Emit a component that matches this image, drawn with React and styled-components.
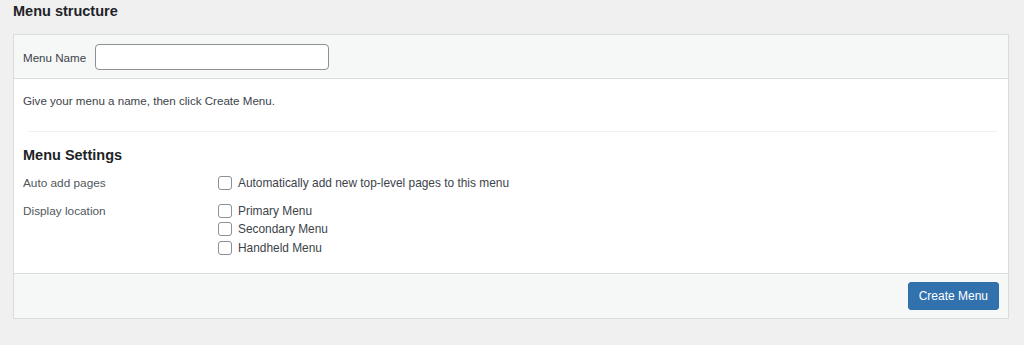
import styled, { createGlobalStyle } from "styled-components";

const GlobalStyle = createGlobalStyle`
  body {
    margin: 0;
    background: #f0f0f1;
    font-family: "Liberation Sans", Arial, sans-serif;
    color: #1d2327;
  }
`;

const Page = styled.div`
  padding: 0 15px 0 13px;
`;

const Title = styled.h2`
  margin: 0 0 12px;
  font-size: 14.5px;
  line-height: 22px;
  font-weight: 700;
`;

const Panel = styled.div`
  background: #fff;
  border: 1px solid #dcdcde;
  box-shadow: 0 1px 1px rgba(0, 0, 0, 0.04);
`;

const Header = styled.div`
  display: flex;
  align-items: center;
  background: #f6f7f7;
  border-bottom: 1px solid #dcdcde;
  padding: 9px 9px 8px;
`;

const FieldLabel = styled.label`
  width: 72px;
  font-size: 11.6px;
  color: #3c434a;
`;

const TextInput = styled.input`
  box-sizing: border-box;
  width: 234px;
  height: 26px;
  border: 1px solid #8c8f94;
  border-radius: 4px;
  background: #fff;
  padding: 0 8px;
  font: inherit;
`;

const Body = styled.div`
  padding: 13px 9px 0;
`;

const Hint = styled.p`
  margin: 0;
  font-size: 11.6px;
  line-height: 18px;
  color: #3c434a;
`;

const Divider = styled.hr`
  margin: 21px 2px 0 5px;
  border: 0;
  border-top: 1px solid #f0f0f1;
`;

const SectionTitle = styled.h3`
  margin: 13px 0 9px;
  font-size: 14.5px;
  line-height: 20px;
  font-weight: 700;
`;

const SettingRow = styled.div`
  display: flex;
  margin-bottom: ${(p) => p.$gap || 0}px;
`;

const RowLabel = styled.div`
  width: 195px;
  flex-shrink: 0;
  font-size: 11.8px;
  line-height: 18.5px;
  color: #50575e;
`;

const Options = styled.div`
  display: flex;
  flex-direction: column;
`;

const Option = styled.label`
  display: flex;
  align-items: center;
  gap: 6px;
  font-size: 11.9px;
  line-height: 18.5px;
  color: #3c434a;
`;

const Box = styled.span`
  box-sizing: border-box;
  width: 14px;
  height: 14px;
  border: 1px solid #8c8f94;
  border-radius: 3px;
  background: #fff;
`;

const Footer = styled.div`
  display: flex;
  justify-content: flex-end;
  margin-top: 16px;
  background: #f6f7f7;
  border-top: 1px solid #dcdcde;
  padding: 8px 9px 8px;
`;

const Button = styled.button`
  height: 28px;
  padding: 0 10px;
  border: 1px solid #2f6ea9;
  border-radius: 3px;
  background: #3172ae;
  color: #fff;
  font-family: inherit;
  font-size: 12px;
`;

function Check({ children }) {
  return (
    <Option>
      <Box />
      {children}
    </Option>
  );
}

function App() {
  return (
    <>
      <GlobalStyle />
      <Page>
        <Title>Menu structure</Title>
        <Panel>
          <Header>
            <FieldLabel>Menu Name</FieldLabel>
            <TextInput />
          </Header>
          <Body>
            <Hint>Give your menu a name, then click Create Menu.</Hint>
            <Divider />
            <SectionTitle>Menu Settings</SectionTitle>
            <SettingRow $gap={9}>
              <RowLabel>Auto add pages</RowLabel>
              <Options>
                <Check>Automatically add new top-level pages to this menu</Check>
              </Options>
            </SettingRow>
            <SettingRow>
              <RowLabel>Display location</RowLabel>
              <Options>
                <Check>Primary Menu</Check>
                <Check>Secondary Menu</Check>
                <Check>Handheld Menu</Check>
              </Options>
            </SettingRow>
          </Body>
          <Footer>
            <Button>Create Menu</Button>
          </Footer>
        </Panel>
      </Page>
    </>
  );
}

export default App;
